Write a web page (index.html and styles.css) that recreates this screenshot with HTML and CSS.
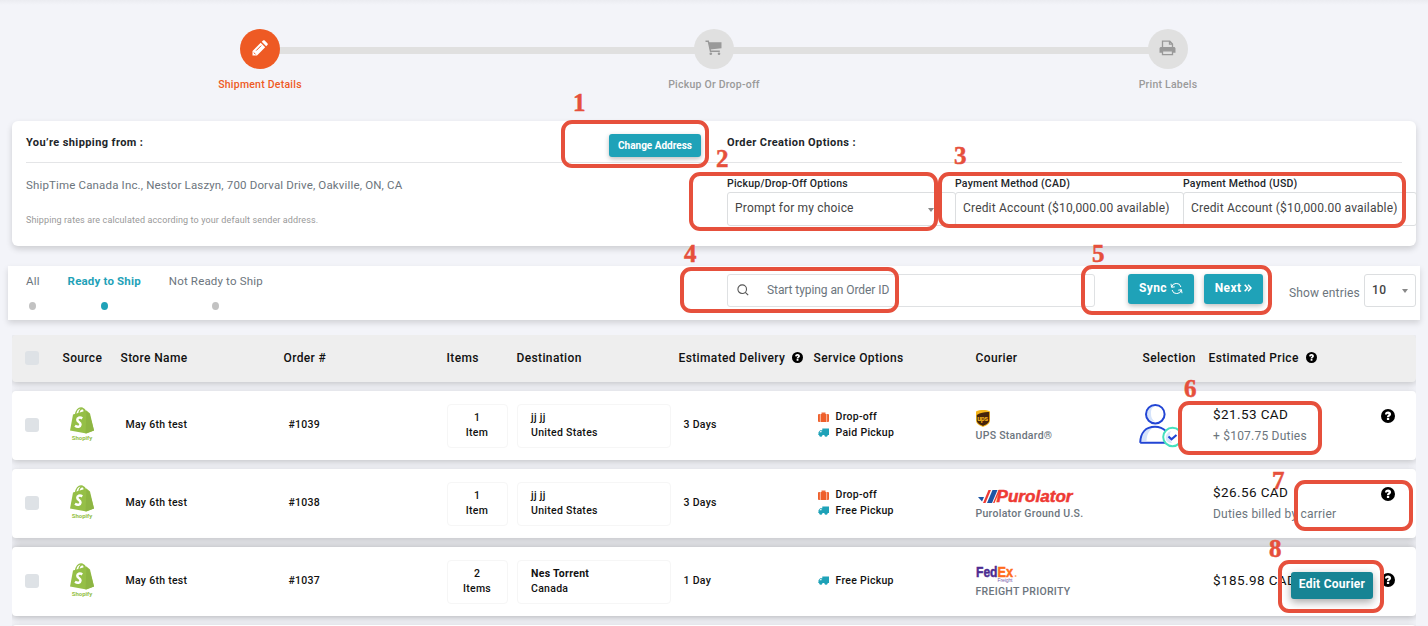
FILE: index.html
```html
<!DOCTYPE html>
<html lang="en">
<head>
  <meta charset="UTF-8">
  <meta name="viewport" content="width=device-width, initial-scale=1.0">
  <title>Shipment Details</title>
  <link rel="stylesheet" href="styles.css">
</head>
<body>
  <!-- shared icons -->
  <svg class="sprite" width="0" height="0">
    <symbol id="help" viewBox="0 0 14 14">
      <circle cx="7" cy="7" r="7" fill="#000"/>
      <path d="M4 5.400C4 3.600 5.300 2.600 7.100 2.600c1.700 0 3 1 3 2.600 0 1.900-1.900 1.900-1.900 3.100H5.900c0-2 1.700-2.100 1.700-3 0-.4-.3-.6-.7-.6-.5 0-.8.300-.9.900zM5.900 9h2.300v2H5.900z" fill="#fff"/>
    </symbol>
    <symbol id="shopify" viewBox="0 0 24 27">
      <path d="M3 7.500L16.500 3.500l3.500 3 4 17-7.500 3L0 23.500z" fill="#95bf47"/>
      <path d="M16.500 4.500l3 2.500 4.500 16.500-8.500 3z" fill="#8db543"/>
      <path d="M5.500 8C6 3.500 8.500.8 11 .8c2 0 3.200 1.800 3.400 4.700M8.800 7c.3-3 1.700-5.200 3.700-5.400 1.800 0 2.600 1.600 3 3.200" fill="none" stroke="#95bf47" stroke-width="1.300"/>
      <path d="M12.300 11.300c-2.600-1.500-5-.5-5 1.500 0 2.200 3.400 2.300 3.200 4.800-.2 2.400-3 2.800-5.500 1.200" fill="none" stroke="#fff" stroke-width="2.500"/>
    </symbol>
    <symbol id="suitcase" viewBox="0 0 11 10">
      <path d="M3.500 2V.5h4V2M4.300 1.300h2.400V2H4.300z" fill="#f06a3a"/>
      <path d="M0 3a1 1 0 0 1 1-1h.9v8H1a1 1 0 0 1-1-1zM2.500 2h6v8h-6zM9.100 2h.9a1 1 0 0 1 1 1v6a1 1 0 0 1-1 1h-.9z" fill="#ee5f2b"/>
    </symbol>
    <symbol id="truck" viewBox="0 0 11 9">
      <path d="M4.300.5H11V7H1.200C.4 7 0 6.800 0 6.200h.5V4.300L2.200 2.200h2.100zM1.500 4.300h2V3H2.600z" fill="#1fa2b8" fill-rule="evenodd"/>
      <circle cx="2.800" cy="7.300" r="1.500" fill="#1fa2b8"/>
      <circle cx="8" cy="7.300" r="1.500" fill="#1fa2b8"/>
    </symbol>
  </svg>

  <div class="page">
    <div class="stepper">
      <div class="step active">
        <div class="circle">
          <svg width="16" height="16" viewBox="0 0 16 16"><path d="M.5 15.500V11L8.700 2.800l4.500 4.500L5 15.500zM9.700 1.800L11 .6c.6-.5 1.200-.5 1.700 0l2.700 2.700c.5.600.5 1.200 0 1.700l-1.200 1.300z" fill="#fff"/><path d="M1.700 12.500l1.900 1.900M4.200 10.600l5-5" stroke="#ee5a24" stroke-width="1"/></svg>
        </div>
        <span>Shipment Details</span>
      </div>
      <div class="step">
        <div class="circle">
          <svg width="17" height="16" viewBox="0 0 17 16"><path d="M.5 1.200h2.800l2.200 10h9.300" fill="none" stroke="#999" stroke-width="1.400"/><path d="M3.600 2.200h12.900v6L5 9.600z" fill="#999"/><circle cx="5.800" cy="13.700" r="1.300" fill="#999"/><circle cx="14" cy="13.700" r="1.300" fill="#999"/></svg>
        </div>
        <span>Pickup Or Drop-off</span>
      </div>
      <div class="step">
        <div class="circle">
          <svg width="17" height="16" viewBox="0 0 17 16"><path d="M3.500 8V1.200h7.300l2.700 2.700V8M10.500 1.500v2.700h2.700" fill="none" stroke="#999" stroke-width="1.300"/><path d="M2.200 7h12.600c1 0 1.700.7 1.700 1.600v4.200h-3V11h-10v1.800h-3V8.600C.5 7.700 1.200 7 2.200 7z" fill="#999"/><path d="M3.500 10.800h10v3.900h-10z" fill="#e0e0e0" stroke="#999" stroke-width="1.300"/></svg>
        </div>
        <span>Print Labels</span>
      </div>
    </div>

    <div class="card">
      <div class="card-head">
        <h2>You’re shipping from :</h2>
        <button class="btn btn-small">Change Address</button>
        <h2 class="options-title">Order Creation Options :</h2>
      </div>
      <div class="card-body">
        <div class="sender">
          <p class="address">ShipTime Canada Inc., Nestor Laszyn, 700 Dorval Drive, Oakville, ON, CA</p>
          <p class="note">Shipping rates are calculated according to your default sender address.</p>
        </div>
        <div class="fields">
          <div class="field"><label>Pickup/Drop-Off Options</label><div class="select caret">Prompt for my choice</div></div>
          <div class="field"><label>Payment Method (CAD)</label><div class="select">Credit Account ($10,000.00 available)</div></div>
          <div class="field"><label>Payment Method (USD)</label><div class="select">Credit Account ($10,000.00 available)</div></div>
        </div>
      </div>
    </div>

    <div class="toolbar">
      <div class="tabs">
        <a class="tab">All</a>
        <a class="tab active">Ready to Ship</a>
        <a class="tab">Not Ready to Ship</a>
      </div>
      <div class="search">
        <svg width="12" height="12" viewBox="0 0 12 12"><circle cx="5.200" cy="5.200" r="4.300" fill="none" stroke="#555" stroke-width="1.100"/><path d="M8.300 8.300l2.900 2.900" stroke="#555" stroke-width="1.100"/></svg>
        <span>Start typing an Order ID</span>
      </div>
      <button class="btn sync">Sync
        <svg width="13" height="11" viewBox="0 0 13 11"><path d="M1.700 4.200A4.700 4.700 0 0 1 10.900 4M11.300 6.800A4.700 4.700 0 0 1 2.100 7M1 .8l.6 3.500 3.200-.5M12 10.200l-.6-3.500-3.200.5" fill="none" stroke="#fff" stroke-width="1"/></svg>
      </button>
      <button class="btn next">Next
        <svg width="8" height="8" viewBox="0 0 8 8"><path d="M.7.7L3.700 4l-3 3.300M4 .7L7 4 4 7.300" fill="none" stroke="#fff" stroke-width="1.500"/></svg>
      </button>
      <span class="entries">Show entries</span>
      <div class="select page-size caret">10</div>
    </div>

    <div class="orders">
      <div class="row head">
        <i class="check"></i>
        <span>Source</span>
        <span>Store Name</span>
        <span>Order #</span>
        <span>Items</span>
        <span>Destination</span>
        <span>Estimated Delivery <svg class="help-small"><use href="#help"/></svg></span>
        <span>Service Options</span>
        <span>Courier</span>
        <span>Selection</span>
        <span>Estimated Price <svg class="help-small"><use href="#help"/></svg></span>
      </div>

      <div class="row">
        <i class="check"></i>
        <div class="source"><svg width="24" height="27"><use href="#shopify"/></svg><b>Shopify</b></div>
        <div class="indent">May 6th test</div>
        <div class="indent">#1039</div>
        <div class="items">1<br>Item</div>
        <div class="dest">jj jj<br>United States</div>
        <div class="indent">3 Days</div>
        <div class="service">
          <div><svg width="11" height="10"><use href="#suitcase"/></svg>Drop-off</div>
          <div><svg width="11" height="9"><use href="#truck"/></svg>Paid Pickup</div>
        </div>
        <div class="courier">
          <svg width="14" height="17" viewBox="0 0 14 17"><path d="M0 1.500C4-.4 10-.4 14 1.500V10c0 4-3 5-7 7-4-2-7-3-7-7z" fill="#f5b51b"/><path d="M.8 5C5 2.300 9 1.800 13.200 2v8c0 3.300-2.500 4.200-6.200 6-3.700-1.800-6.200-2.700-6.200-6z" fill="#45230b"/><text class="ups-text" x="1.200" y="10.800">ups</text></svg>
          <span>UPS Standard®</span>
        </div>
        <div class="selection">
          <svg width="44" height="46" viewBox="0 0 44 46">
            <path d="M10 12.500a8 8 0 0 1 9-9c-4 1.500-5 4-5 8s1 6 4 8c-4 0-8-3-8-7zM4 39c.5-8 5-13 13-14-5 3-7 7-7.500 14z" fill="#d6e4fb"/>
            <circle cx="18.300" cy="12.200" r="9.300" fill="none" stroke="#2245d4" stroke-width="2"/>
            <path d="M3.200 40.700C3.500 31 8.500 24.800 18 24.800c5 0 8 1.500 11 4.500M3.200 40.700H28" fill="none" stroke="#2245d4" stroke-width="2"/>
            <circle cx="35.500" cy="35" r="9.300" fill="#fff" stroke="#45e0be" stroke-width="2"/>
            <path d="M29 38a7 7 0 0 1 5-9c-2 3-2 7 1 12-3 0-5-1-6-3z" fill="#d6e4fb"/>
            <path d="M31.500 34.500l3 2.800 5-4.300" fill="none" stroke="#2245d4" stroke-width="2.200"/>
          </svg>
        </div>
        <div class="price"><strong>$21.53 CAD</strong><small>+ $107.75 Duties</small></div>
        <svg class="help"><use href="#help"/></svg>
      </div>

      <div class="row">
        <i class="check"></i>
        <div class="source"><svg width="24" height="27"><use href="#shopify"/></svg><b>Shopify</b></div>
        <div class="indent">May 6th test</div>
        <div class="indent">#1038</div>
        <div class="items">1<br>Item</div>
        <div class="dest">jj jj<br>United States</div>
        <div class="indent">3 Days</div>
        <div class="service">
          <div><svg width="11" height="10"><use href="#suitcase"/></svg>Drop-off</div>
          <div><svg width="11" height="9"><use href="#truck"/></svg>Free Pickup</div>
        </div>
        <div class="courier">
          <svg width="100" height="17" viewBox="0 0 100 17"><path d="M2 9h6l-2 4.500z" fill="#1b55a5"/><path d="M12.500 2H15L9.500 15H7z" fill="#ee3a34"/><path d="M16.500 2h5L16 15h-5z" fill="#1b55a5"/><path d="M22.500 2H24l-5.500 13H17z" fill="#ee3a34"/><text class="puro-text" x="20.500" y="14" textLength="76" lengthAdjust="spacingAndGlyphs">Purolator</text></svg>
          <span>Purolator Ground U.S.</span>
        </div>
        <div></div>
        <div class="price"><strong>$26.56 CAD</strong><small>Duties billed by carrier</small></div>
        <svg class="help"><use href="#help"/></svg>
      </div>

      <div class="row hover">
        <i class="check"></i>
        <div class="source"><svg width="24" height="27"><use href="#shopify"/></svg><b>Shopify</b></div>
        <div class="indent">May 6th test</div>
        <div class="indent">#1037</div>
        <div class="items">2<br>Items</div>
        <div class="dest"><b>Nes Torrent</b><br>Canada</div>
        <div class="indent">1 Day</div>
        <div class="service">
          <div><svg width="11" height="9"><use href="#truck"/></svg>Free Pickup</div>
        </div>
        <div class="courier">
          <svg width="42" height="18" viewBox="0 0 42 18"><text class="fedex-text fed" x="0" y="12" textLength="21.500" lengthAdjust="spacingAndGlyphs">Fed</text><text class="fedex-text ex" x="21.500" y="12" textLength="15.500" lengthAdjust="spacingAndGlyphs">Ex</text><circle cx="39.500" cy="11" r="1" fill="#ffb27d"/><text class="freight-text" x="21.500" y="17" textLength="15">Freight</text></svg>
          <span>FREIGHT PRIORITY</span>
        </div>
        <div></div>
        <div class="price"><strong>$185.98 CAD</strong></div>
        <svg class="help"><use href="#help"/></svg>
        <button class="btn edit">Edit Courier</button>
      </div>

      <div class="row"></div>
    </div>

    <!-- numbered callouts -->
    <div class="mark mark1"></div><b class="num num1">1</b>
    <div class="mark mark2"></div><b class="num num2">2</b>
    <div class="mark mark3"></div><b class="num num3">3</b>
    <div class="mark mark4"></div><b class="num num4">4</b>
    <div class="mark mark5"></div><b class="num num5">5</b>
    <div class="mark mark6"></div><b class="num num6">6</b>
    <div class="mark mark7"></div><b class="num num7">7</b>
    <div class="mark mark8"></div><b class="num num8">8</b>
  </div>
</body>
</html>
```
FILE: styles.css
```css
* { box-sizing: border-box; }
body {
  margin: 0;
  background: #f3f4f9;
  font-family: Roboto, "Liberation Sans", sans-serif;
  font-size: 11px;
  color: #212529;
  letter-spacing: 0.4px;
}
h2, p { margin: 0; }
.sprite { position: absolute; }
svg { display: block; flex: none; }
.page {
  position: relative;
  width: 1428px;
  height: 626px;
  overflow: hidden;
  background: linear-gradient(#ebecf1, #f3f4f9 5px);
}

/* stepper */
.stepper {
  display: flex;
  justify-content: space-between;
  height: 121px;
  padding: 29px 200px 0;
  background: linear-gradient(#e0e0e0, #e0e0e0) 260px 47px / 908px 7px no-repeat;
}
.step {
  display: flex;
  flex-direction: column;
  align-items: center;
  width: 120px;
  color: #9a9a9a;
  font-size: 10.5px;
  font-weight: 500;
  line-height: 14px;
  letter-spacing: 0.23px;
}
.circle {
  display: flex;
  align-items: center;
  justify-content: center;
  width: 40px;
  height: 40px;
  margin-bottom: 9px;
  padding: 0 1px 2px 0;
  border-radius: 50%;
  background: #e0e0e0;
}
.step.active { color: #ee5a24; }
.step.active .circle { background: #ee5a24; }

/* buttons and selects */
.btn {
  border: 0;
  padding: 0 0 2px;
  border-radius: 3px;
  background: #1fa2b8;
  color: #fff;
  font: bold 12px Roboto, sans-serif;
  letter-spacing: 0.4px;
  box-shadow: 0 2px 5px rgba(0, 0, 0, 0.25);
}
.btn-small { width: 92px; height: 23px; padding: 0; font-size: 10px; letter-spacing: 0; }
.select {
  position: relative;
  height: 34px;
  padding-left: 7px;
  border: 1px solid #dcdee0;
  border-radius: 3px;
  background: #fff;
  color: #444;
  font-size: 12px;
  line-height: 30px;
  letter-spacing: 0.18px;
  white-space: nowrap;
}
.caret::after {
  content: "";
  position: absolute;
  right: 21px;
  top: 15px;
  border: 3px solid transparent;
  border-top: 4px solid #888;
  border-bottom: 0;
}

/* sender card */
.card {
  height: 125px;
  margin: 0 12px 20px;
  padding: 0 0 0 14px;
  border-radius: 6px;
  background: #fff;
  box-shadow: 0 3px 6px rgba(0, 0, 0, 0.16);
}
.card-head {
  display: flex;
  height: 42px;
  margin-right: 14px;
  padding-top: 13px;
  border-bottom: 1px solid #e4e5e7;
}
.card-head h2 { width: 583px; font-size: 11px; font-weight: bold; line-height: 17px; }
.card-head .options-title { width: auto; margin-left: 26px; }
.card-body { display: flex; }
.sender { width: 701px; }
.address {
  margin-top: 14px;
  color: #6c757d;
  font-size: 11.5px;
  line-height: 16px;
  letter-spacing: 0.16px;
}
.note { margin-top: 21px; color: #999; font-size: 9px; line-height: 12px; letter-spacing: 0.12px; }
.fields { display: flex; width: 689px; padding-top: 14px; }
.field { width: 228px; }
.field:last-child { width: 233px; }
.field label {
  display: block;
  position: relative;
  z-index: 1;
  width: max-content;
  height: 15px;
  background: #fff;
  font-size: 10.5px;
  font-weight: 500;
  line-height: 13px;
  letter-spacing: 0.22px;
}
.field .select { margin-right: -1px; }

/* toolbar */
.toolbar {
  display: flex;
  height: 54px;
  margin: 0 8px 15px;
  padding: 8px 4px 0 18px;
  background: #fff;
  box-shadow: 0 3px 6px rgba(0, 0, 0, 0.14);
}
.toolbar > * { flex: none; }
.tabs { display: flex; gap: 28px; width: 701px; }
.tab {
  height: 40px;
  color: #6c757d;
  font-size: 11.5px;
  line-height: 15px;
  letter-spacing: 0.17px;
}
.tab::after {
  content: "";
  display: block;
  width: 7px;
  height: 8px;
  margin: 13px auto 0;
  border-radius: 50%;
  background: #c2c2c2;
}
.tab.active { color: #1fa2b8; font-weight: bold; }
.tab.active::after { background: #1fa2b8; }
.search {
  display: flex;
  align-items: center;
  gap: 18px;
  width: 368px;
  height: 33px;
  padding: 0 0 1px 9px;
  border: 1px solid #dfe1e3;
  border-radius: 3px;
  color: #6c757d;
  font-size: 12px;
  letter-spacing: -0.08px;
}
.sync, .next {
  display: flex;
  align-items: center;
  justify-content: center;
  gap: 3px;
  width: 66px;
  height: 30px;
}
.sync { margin: 0 10px 0 33px; }
.next { width: 59px; }
.entries {
  width: 68px;
  margin: 11px 7px 0 26px;
  color: #6c757d;
  font-size: 12px;
  line-height: 16px;
  letter-spacing: 0.15px;
  white-space: nowrap;
}
.page-size { width: 52px; height: 33px; font-weight: 500; letter-spacing: 0.4px; }
.page-size.caret::after { right: 7px; top: 14px; }

/* orders */
.orders { height: 291px; margin: 0 12px; overflow: hidden; }
.row {
  position: relative;
  display: grid;
  grid-template-columns: 37px 58px 163px 163px 70px 162px 135px 162px 167px 66px 172px 14px;
  align-items: center;
  height: 69px;
  margin-bottom: 9px;
  padding: 0 0 2px 13.5px;
  border-radius: 4px;
  background: #fff;
  color: #111;
  font-size: 10.5px;
  font-weight: 500;
  letter-spacing: 0.28px;
  box-shadow: 0 2px 7px rgba(0, 0, 0, 0.2);
}
.row.head {
  height: 47px;
  background: #eee;
  font-size: 12px;
  letter-spacing: 0.37px;
}
.row.hover { box-shadow: 0 2px 7px rgba(0, 0, 0, 0.2), 0 -3px 8px rgba(0, 0, 0, 0.14); }
.row.head span { display: flex; align-items: center; white-space: nowrap; }
.help-small { width: 11px; height: 11px; margin-left: 7px; }
.check { width: 14px; height: 14px; margin-left: -0.5px; border-radius: 3px; background: #dee2e6; }
.source { display: flex; flex-direction: column; align-items: center; width: 39px; }
.source b { color: #95bf47; font-size: 6px; line-height: 8px; letter-spacing: 0; }
.indent { padding-left: 5px; }
.items, .dest {
  height: 44px;
  margin-top: 2px;
  padding-top: 5px;
  border: 1px solid #f6f6f6;
  border-radius: 4px;
  line-height: 15.500px;
}
.items { width: 61px; text-align: center; }
.dest { width: 154px; padding-left: 13.500px; }
.service { padding-left: 4px; line-height: 15.500px; }
.service div { display: flex; align-items: center; gap: 7px; }
.courier { padding-top: 4px; color: #6c757d; line-height: 16px; }
.courier span { display: block; margin-top: 1px; }
.ups-text { font: bold 7px Roboto, sans-serif; letter-spacing: -0.3px; fill: #f5b51b; }
.puro-text {
  font: italic bold 16px "Liberation Sans", sans-serif;
  letter-spacing: 0;
  fill: #ee3a34;
  stroke: #ee3a34;
  stroke-width: 0.5px;
}
.fedex-text { font: bold 15.500px "Liberation Sans", sans-serif; letter-spacing: 0; stroke-width: 0.5px; }
.fed { fill: #4d2c91; stroke: #4d2c91; }
.ex { fill: #ff6b1a; stroke: #ff6b1a; }
.freight-text { font: 5px "Liberation Sans", sans-serif; letter-spacing: 0; fill: #7a63ad; }
.selection { margin-left: -6px; }
.price { padding: 2px 0 0 4.500px; white-space: nowrap; }
.price strong {
  display: block;
  font-size: 13.500px;
  font-weight: normal;
  line-height: 20px;
  letter-spacing: 0.4px;
}
.price small {
  display: block;
  color: #6c757d;
  font-size: 12px;
  font-weight: normal;
  line-height: 24px;
  letter-spacing: 0.22px;
}
.help { width: 14px; height: 14px; margin-top: -17px; }
.hover .price { padding-top: 0; margin-top: -2px; }
.hover .help { margin-top: -1px; }
.edit {
  position: absolute;
  left: 1279px;
  top: 25px;
  width: 82px;
  height: 27px;
  padding-bottom: 3px;
  background: #178494;
  letter-spacing: 0.25px;
  box-shadow: 0 3px 8px rgba(0, 0, 0, 0.35);
}

/* callouts */
.mark { position: absolute; border: 4px solid #e6503c; border-radius: 11px; }
.mark1 { left: 561px; top: 120px; width: 148px; height: 48px; }
.mark2 { left: 689px; top: 172px; width: 249px; height: 59px; }
.mark3 { left: 938px; top: 172px; width: 468px; height: 56px; }
.mark4 { left: 680px; top: 267px; width: 219px; height: 46px; }
.mark5 { left: 1081px; top: 265px; width: 191px; height: 50px; }
.mark6 { left: 1178px; top: 401px; width: 144px; height: 54px; }
.mark7 { left: 1294px; top: 480px; width: 119px; height: 51px; }
.mark8 { left: 1278px; top: 560px; width: 106px; height: 53px; }
.num {
  position: absolute;
  color: #e6503c;
  font: bold 25px/25px "Liberation Serif", serif;
  letter-spacing: 0;
  -webkit-text-stroke: 0.5px #e6503c;
}
.num1 { left: 573px; top: 90px; }
.num2 { left: 716px; top: 146px; }
.num3 { left: 954px; top: 143px; }
.num4 { left: 684px; top: 241px; }
.num5 { left: 1092px; top: 241px; }
.num6 { left: 1184px; top: 376px; }
.num7 { left: 1272px; top: 468px; }
.num8 { left: 1269px; top: 536px; }
```
